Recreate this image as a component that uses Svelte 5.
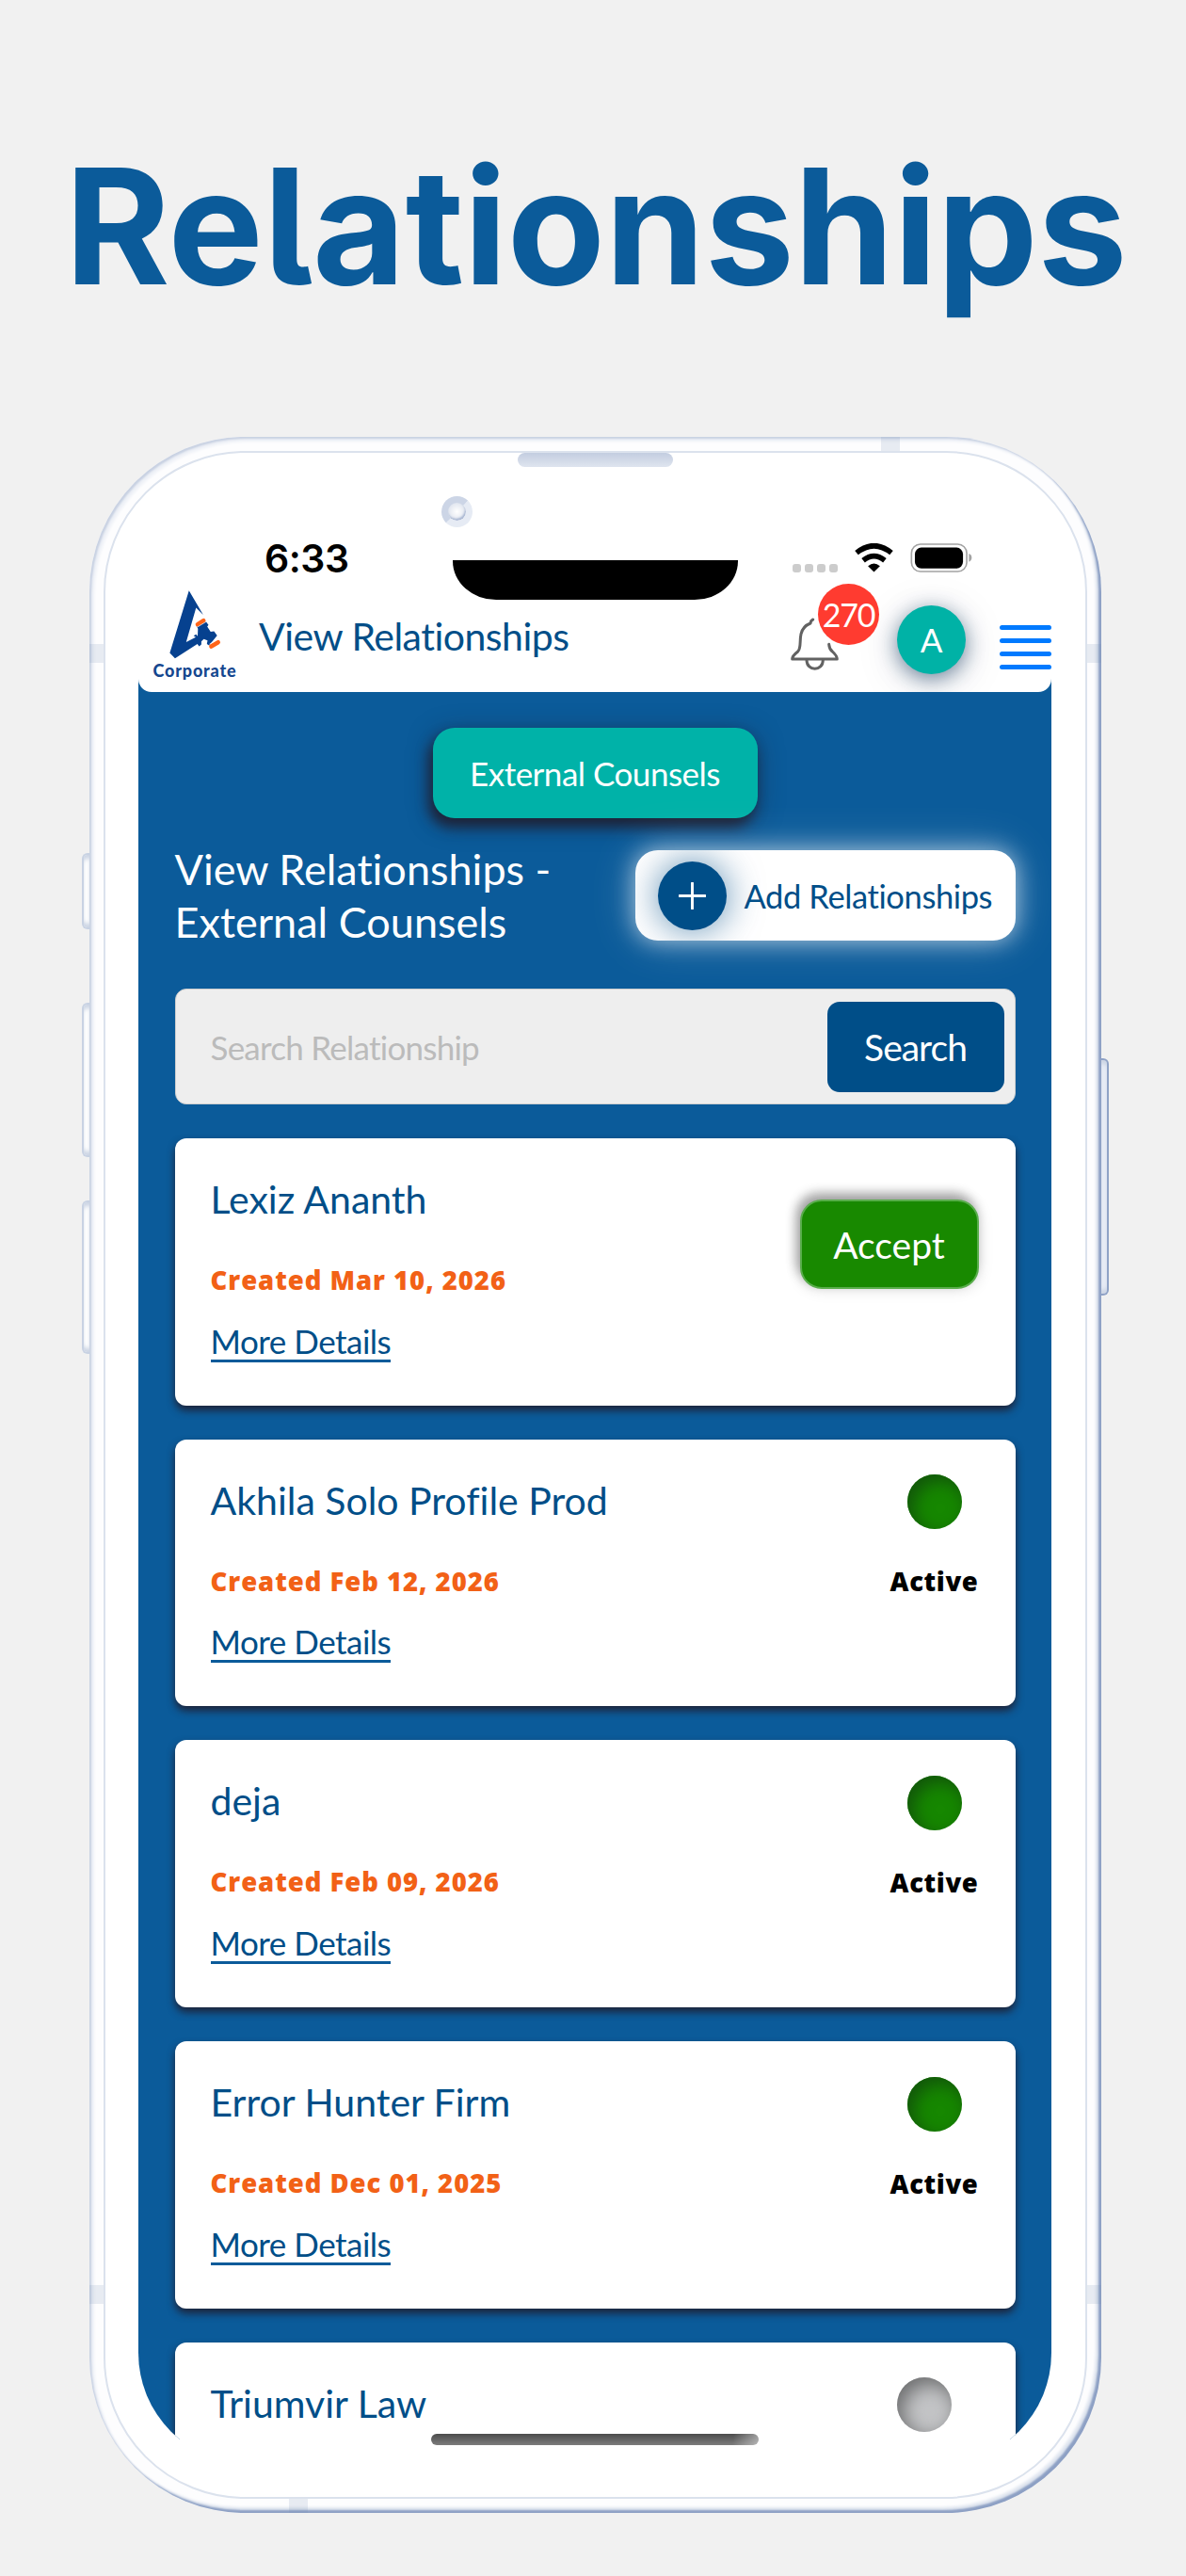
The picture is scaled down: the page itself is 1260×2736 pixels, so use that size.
<script>
  let query = $state('');

  const relationships = [
    { name: 'Lexiz Ananth', created: 'Mar 10, 2026', status: 'pending' },
    { name: 'Akhila Solo Profile Prod', created: 'Feb 12, 2026', status: 'active' },
    { name: 'deja', created: 'Feb 09, 2026', status: 'active' },
    { name: 'Error Hunter Firm', created: 'Dec 01, 2025', status: 'active' },
    { name: 'Triumvir Law', created: '', status: 'inactive' },
  ];
</script>

<div class="page">
  <h1>Relationships</h1>

  <div class="phone">
    <i class="key key-mute"></i>
    <i class="key key-up"></i>
    <i class="key key-down"></i>
    <i class="key key-power"></i>
    <i class="band band-top"></i>
    <i class="band band-bottom"></i>
    <i class="band band-left"></i>
    <i class="band band-left low"></i>
    <i class="band band-right"></i>
    <i class="band band-right low"></i>

    <div class="bezel">
      <i class="speaker"></i>
      <i class="camera"></i>
      <i class="notch"></i>

      <div class="screen">
        <header>
          <div class="status-bar">
            <span class="time">6:33</span>
            <div class="status-icons">
              <div class="signal"><i></i><i></i><i></i><i></i></div>
              <svg class="wifi" viewBox="249 52 122 92">
                <g fill="none" stroke="#000" stroke-width="17">
                  <path d="M255 82Q310 38 365 82" />
                  <path d="M276 106Q310 79 344 106" />
                </g>
                <path d="M291 124Q310 108 329 124L310 143Z" />
              </svg>
              <svg class="battery" viewBox="424 51 198 94">
                <rect x="427" y="54" width="178" height="88" rx="29" fill="none" stroke="#a3a3a3" stroke-width="5" />
                <rect x="438" y="65" width="155" height="67" rx="21" />
                <path d="M612 84Q621 87 621 97T612 111Z" fill="#a3a3a3" />
              </svg>
            </div>
          </div>

          <div class="nav">
            <div class="brand">
              <svg viewBox="75 36 165 222">
                <path
                  fill="#06418f"
                  d="M137 37L183 115L160 92L128 203L159 187L152 183L160 178L165 184L166 160L162 153L192 137L200 148L196 153L207 170L218 168L228 182L202 214L195 209L197 198L185 193L177 201L177 211L170 217L164 209L92 256L75 238Z"
                />
                <g stroke="#ff6418" stroke-width="14">
                  <path stroke-linecap="round" d="M165 146L184 134M209 217L231 204" />
                </g>
                <path stroke="#fff" stroke-width="2" d="M162 156L193 137M203 210L230 194" />
              </svg>
              <span>Corporate</span>
            </div>
            <div class="nav-title">View Relationships</div>
            <div class="actions">
              <div class="bell">
                <svg viewBox="45 288 153 168">
                  <g fill="none" stroke="#626262" stroke-width="9" stroke-linecap="round" stroke-linejoin="round">
                    <path d="M116 294L110 299L108 306Q84 315 78 340C73 362 79 385 68 396Q50 410 50 420H193Q193 410 178 396Q168 388 167 373" />
                    <path d="M96 423C96 460 148 460 148 423" />
                  </g>
                </svg>
                <span class="badge">270</span>
              </div>
              <div class="avatar">A</div>
              <div class="menu"><i></i><i></i><i></i><i></i></div>
            </div>
          </div>
        </header>

        <main>
          <button class="tab">External Counsels</button>

          <div class="heading">
            <h2>View Relationships -<br />External Counsels</h2>
            <button class="add">
              <span class="plus">
                <svg viewBox="0 0 30 30"><path d="M15 1V29M1 15H29" stroke="#fff" stroke-width="3" stroke-linecap="round" /></svg>
              </span>
              <span class="add-label">Add Relationships</span>
            </button>
          </div>

          <div class="search">
            <input type="text" placeholder="Search Relationship" bind:value={query} />
            <button>Search</button>
          </div>

          {#each relationships as item}
            <div class="card">
              <div class="info">
                <div class="name">{item.name}</div>
                {#if item.created}
                  <div class="created">Created {item.created}</div>
                  <a class="more" href="#details">More Details</a>
                {/if}
              </div>
              {#if item.status === 'pending'}
                <button class="accept">Accept</button>
              {:else}
                <div class="state {item.status}">
                  <i class="dot"></i>
                  {#if item.status === 'active'}<span>Active</span>{/if}
                </div>
              {/if}
            </div>
          {/each}
        </main>
      </div>

      <i class="home-bar"></i>
    </div>
  </div>
</div>

<style>
  :global(body) { margin: 0; background: #f1f1f1; }

  .page {
    width: 1260px;
    height: 2736px;
    overflow: hidden;
    background: #f1f1f1;
    font-family: Lato, "Liberation Sans", sans-serif;
    font-variant-ligatures: none;
    color: #004e88;
  }

  h1 {
    margin: 140px 0 124px 69px;
    font: 700 170px/200px Inter, sans-serif;
    font-feature-settings: "cv05";
    letter-spacing: -0.1px;
    color: #0b5b9a;
    white-space: nowrap;
  }

  i { display: block; }
  button { border: 0; padding: 0; font-family: inherit; cursor: pointer; }

  /* phone frame */
  .phone {
    position: relative;
    box-sizing: border-box;
    width: 1075px;
    height: 2205px;
    margin-left: 95px;
    padding: 15px;
    border-radius: 165px;
    background: #fdfdfe;
    box-shadow:
      inset 2px 2px 2px #c8d1e2,
      inset -3px -3px 2px #8da0c4,
      inset 5px 5px 3px #eef1f7,
      inset -6px -6px 3px #dfe5ef;
  }
  .bezel {
    position: relative;
    box-sizing: border-box;
    height: 100%;
    padding: 35px;
    border: 2px solid #dbe2ed;
    border-radius: 150px;
    background: #fff;
  }
  .key {
    position: absolute;
    left: -8px;
    box-sizing: border-box;
    width: 8px;
    border: 2px solid #c8d2e3;
    border-right: 0;
    border-radius: 6px 0 0 6px;
    background: #fbfcfd;
    box-shadow: inset 0 6px 4px -2px #ccd5e4, inset 0 -6px 4px -2px #ccd5e4;
  }
  .key-mute { top: 442px; height: 81px; }
  .key-up { top: 601px; height: 164px; }
  .key-down { top: 811px; height: 163px; }
  .key-power {
    top: 660px;
    right: -8px;
    left: auto;
    height: 252px;
    border: 2px solid #8fa2c6;
    border-left: 0;
    border-radius: 0 6px 6px 0;
    background: #e6ebf5;
  }
  .band { position: absolute; background: rgba(120, 140, 180, 0.16); }
  .band-top { top: 0; left: 841px; width: 20px; height: 16px; }
  .band-bottom { bottom: 0; left: 212px; width: 20px; height: 16px; }
  .band-left { top: 220px; left: 0; width: 16px; height: 20px; }
  .band-right { top: 220px; right: 0; width: 16px; height: 20px; }
  .low { top: 1963px; }

  .speaker {
    position: absolute;
    top: 0;
    left: 438px;
    width: 165px;
    height: 15px;
    border-radius: 8px;
    background: linear-gradient(#c3cde0, #dfe5ef);
  }
  .camera {
    position: absolute;
    z-index: 2;
    top: 46px;
    left: 357px;
    box-sizing: border-box;
    width: 33px;
    height: 33px;
    border: 7px solid #e6ebf4;
    border-top-color: #ccd5e6;
    border-left-color: #ccd5e6;
    border-radius: 50%;
    background: radial-gradient(#fff, #dfe4ee 75%);
    box-shadow: inset -1px -2px 2px #a9b7d2;
  }
  .notch {
    position: absolute;
    z-index: 2;
    top: 114px;
    left: 369px;
    width: 303px;
    height: 42px;
    border-radius: 0 0 46px 46px / 0 0 41px 41px;
    background: #000;
  }
  .home-bar {
    position: absolute;
    bottom: 55px;
    left: 346px;
    width: 348px;
    height: 12.5px;
    border-radius: 7px;
    background: linear-gradient(95deg, transparent 92%, rgba(255, 255, 255, 0.45)), linear-gradient(#4c4c4c, #7c7c7c);
  }

  .screen {
    width: 970px;
    height: 2101px;
    clip-path: inset(0 round 118px);
  }

  /* header */
  header {
    position: relative;
    z-index: 1;
    box-sizing: border-box;
    height: 219px;
    padding-top: 56px;
    overflow: hidden;
    border-radius: 0 0 14px 14px;
    background: #fff;
  }
  .status-bar {
    display: flex;
    justify-content: space-between;
    height: 42px;
    padding: 0 84px 0 134px;
  }
  .time { font: 600 41px/42px Inter, sans-serif; color: #000; letter-spacing: -0.5px; }
  .status-icons { display: flex; align-items: flex-end; padding-bottom: 6px; }
  .signal { display: flex; gap: 4px; margin-right: 18px; }
  .signal i { width: 9px; height: 9px; border-radius: 3px; background: #ccc; }
  .wifi { width: 41px; height: 31px; margin-right: 18px; }
  .battery { width: 66px; height: 31px; }

  .nav { display: flex; align-items: flex-start; padding-left: 16px; }
  .brand {
    display: flex;
    flex-direction: column;
    align-items: center;
    width: 88px;
    padding-top: 13px;
  }
  .brand svg { width: 55px; height: 73px; }
  .brand span {
    margin-top: 1px;
    font-size: 18px;
    font-weight: 900;
    line-height: 22px;
    letter-spacing: 0.8px;
    color: #15478f;
  }
  .nav-title {
    margin: 35px 0 0 24px;
    font-size: 41px;
    line-height: 54px;
    letter-spacing: -0.5px;
    white-space: nowrap;
  }
  .actions { display: flex; align-items: flex-start; margin-left: auto; }
  .bell { position: relative; width: 51px; height: 56px; margin: 42px 62px 0 0; }
  .bell svg { display: block; width: 51px; height: 56px; }
  .badge {
    position: absolute;
    top: -36px;
    left: 29px;
    width: 65px;
    height: 65px;
    border-radius: 50%;
    background: #ff3b30;
    color: #fff;
    font-size: 34px;
    line-height: 65px;
    text-align: center;
    letter-spacing: -1.2px;
  }
  .avatar {
    width: 73px;
    height: 73px;
    margin: 29px 36px 0 0;
    border-radius: 50%;
    background: #00b2a6;
    box-shadow: 0 5px 22px rgba(0, 40, 80, 0.55), 0 8px 50px rgba(0, 40, 80, 0.12);
    color: #fff;
    font-size: 35px;
    line-height: 73px;
    text-align: center;
  }
  .menu { display: flex; flex-direction: column; gap: 9.4px; width: 55px; margin-top: 50px; }
  .menu i { height: 4.6px; border-radius: 3px; background: #007aff; }

  /* content */
  main {
    display: flex;
    flex-direction: column;
    box-sizing: border-box;
    height: 1896px;
    margin-top: -14px;
    padding: 52px 38.5px 0;
    background: linear-gradient(#0b5b9a calc(100% - 26px), #fff 0);
  }
  .tab {
    flex-shrink: 0;
    align-self: center;
    width: 345px;
    height: 96px;
    border-radius: 23px;
    background: #00b2a8;
    box-shadow: -4px 9px 14px #1e2338, 0 5px 26px rgba(30, 35, 56, 0.5);
    color: #fff;
    font-size: 35px;
    letter-spacing: -0.5px;
    white-space: nowrap;
  }
  .heading {
    display: flex;
    justify-content: space-between;
    align-items: center;
    margin-top: 26px;
  }
  h2 {
    margin: 0;
    color: #fff;
    font-size: 45px;
    font-weight: 400;
    line-height: 56px;
    white-space: nowrap;
  }
  .add {
    display: flex;
    align-items: center;
    box-sizing: border-box;
    width: 404px;
    height: 96px;
    padding-left: 24px;
    border-radius: 24px;
    overflow: hidden;
    background: #fff;
    box-shadow: 0 0 24px rgba(255, 255, 255, 0.6), 0 0 50px rgba(255, 255, 255, 0.25);
    color: #004e88;
    font-size: 34.5px;
    letter-spacing: -0.4px;
    white-space: nowrap;
  }
  .plus {
    display: flex;
    flex-shrink: 0;
    align-items: center;
    justify-content: center;
    width: 73px;
    height: 73px;
    margin-right: 19px;
    border-radius: 50%;
    background: #004e88;
    box-shadow: 0 0 38px rgba(0, 78, 136, 0.65);
  }
  .plus svg { width: 29px; height: 29px; }
  .search {
    display: flex;
    flex-shrink: 0;
    align-items: center;
    box-sizing: border-box;
    height: 123px;
    margin-top: 43px;
    padding: 0 11px 0 37px;
    border: 1px solid #cfcfcf;
    border-radius: 12px;
    background: #eee;
  }
  .search input {
    flex: 1;
    min-width: 0;
    padding: 0;
    border: 0;
    outline: 0;
    background: none;
    color: #004e88;
    font: 400 35px/44px Lato, sans-serif;
    letter-spacing: -0.75px;
  }
  .search input::placeholder { color: #bbb; opacity: 1; }
  .search button {
    width: 188px;
    height: 96px;
    border-radius: 13px;
    background: #004e88;
    color: #fff;
    font-size: 39px;
    letter-spacing: -1px;
  }

  .card {
    display: flex;
    justify-content: space-between;
    box-sizing: border-box;
    height: 283.7px;
    flex-shrink: 0;
    margin-top: 36px;
    padding: 35px 39px 0 38px;
    border-radius: 12px;
    background: #fff;
    box-shadow: 0 5px 8px #1e2338;
  }
  .name { padding-top: 2px; font-size: 41px; line-height: 56px; white-space: nowrap; }
  .created {
    margin-top: 38px;
    color: #f26116;
    font-family: "Open Sans", sans-serif;
    font-size: 27.5px;
    font-weight: 800;
    line-height: 40px;
    letter-spacing: 0.95px;
  }
  .more {
    display: inline-block;
    margin-top: 24.5px;
    border-bottom: 3px solid #0b5b9a;
    color: inherit;
    font-size: 35px;
    line-height: 39px;
    letter-spacing: -0.5px;
    text-decoration: none;
  }
  .accept {
    width: 190px;
    height: 95px;
    margin-top: 30px;
    border: 2px solid #59ad4b;
    border-radius: 23px;
    background: #188900;
    box-shadow: -4px -7px 12px rgba(0, 0, 0, 0.32), 0 0 16px rgba(0, 0, 0, 0.15);
    color: #fff;
    font-size: 39px;
  }
  .state {
    display: flex;
    flex-direction: column;
    align-items: center;
    min-width: 94px;
    padding-top: 2.5px;
  }
  .dot { width: 58px; height: 58px; border-radius: 50%; }
  .active .dot { background: #168700; box-shadow: inset 6px 7px 18px #12550a; }
  .inactive { min-width: 116px; }
  .inactive .dot { background: #c3c4c6; box-shadow: inset 6px 7px 20px #6c6d6e; }
  .state span {
    margin-top: 36px;
    color: #000;
    font-family: "Open Sans", sans-serif;
    font-size: 27.5px;
    font-weight: 800;
    line-height: 40px;
    letter-spacing: 0.6px;
  }
</style>
